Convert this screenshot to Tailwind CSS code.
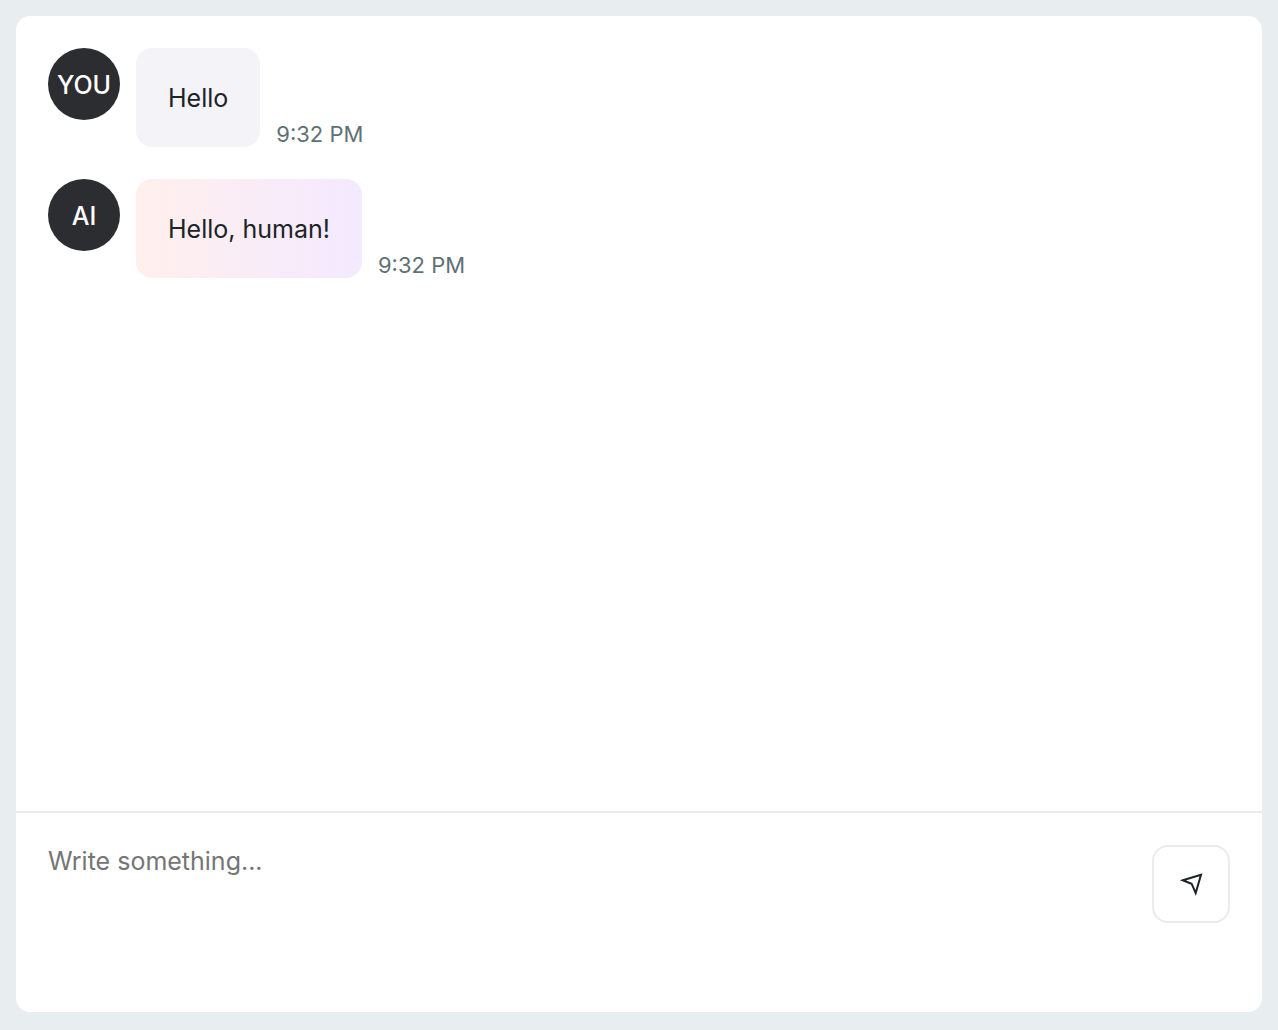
<!DOCTYPE html>
<html lang="en">
<head>
<meta charset="utf-8">
<meta name="viewport" content="width=device-width, initial-scale=1">
<title>Chat</title>
<script src="https://cdn.jsdelivr.net/npm/@tailwindcss/browser@4"></script>
</head>
<body class="flex h-screen flex-col bg-[#e8edef] p-4 pb-[18px] font-['Inter',sans-serif] text-[25px] leading-[34px] text-[#1b2426]">
  <main class="flex min-h-0 flex-1 flex-col overflow-hidden rounded-[14px] bg-white">
    <ol class="flex min-h-0 flex-1 flex-col gap-8 overflow-y-auto p-8">
      <li class="flex items-start gap-4">
        <div class="flex size-[72px] shrink-0 items-center justify-center rounded-full bg-[#2c2d31] pt-[2px] font-medium text-white">YOU</div>
        <div class="flex items-end gap-4">
          <p class="rounded-2xl bg-[#f4f3f8] px-8 pt-[33px] pb-8">Hello</p>
          <time datetime="21:32" class="text-[22px] leading-[26px] text-[#5e7175]">9:32 PM</time>
        </div>
      </li>
      <li class="flex items-start gap-4">
        <div class="flex size-[72px] shrink-0 items-center justify-center rounded-full bg-[#2c2d31] pt-[2px] font-medium text-white">AI</div>
        <div class="flex items-end gap-4">
          <p class="rounded-2xl bg-linear-to-r from-[#fff0ec] via-[#f6eafc] via-80% to-[#f3eaff] px-8 pt-[33px] pb-8">Hello, human!</p>
          <time datetime="21:32" class="text-[22px] leading-[26px] text-[#5e7175]">9:32 PM</time>
        </div>
      </li>
    </ol>
    <form class="flex items-start gap-8 border-t-2 border-[#ebebeb] p-8">
      <textarea aria-label="Message" placeholder="Write something..." class="block h-[135px] min-w-0 flex-1 resize-none leading-8 outline-none placeholder:text-[#757575]"></textarea>
      <button type="button" aria-label="Send" class="flex size-[78px] shrink-0 items-center justify-center rounded-2xl border-2 border-[#ebebeb] bg-white">
        <svg class="size-8" viewBox="0 0 32 32" fill="none" stroke="#1b2426" stroke-width="2" aria-hidden="true"><path d="M7.9 12.3 26 6.8 20.7 25 16.6 15.7Z"/></svg>
      </button>
    </form>
  </main>
</body>
</html>
